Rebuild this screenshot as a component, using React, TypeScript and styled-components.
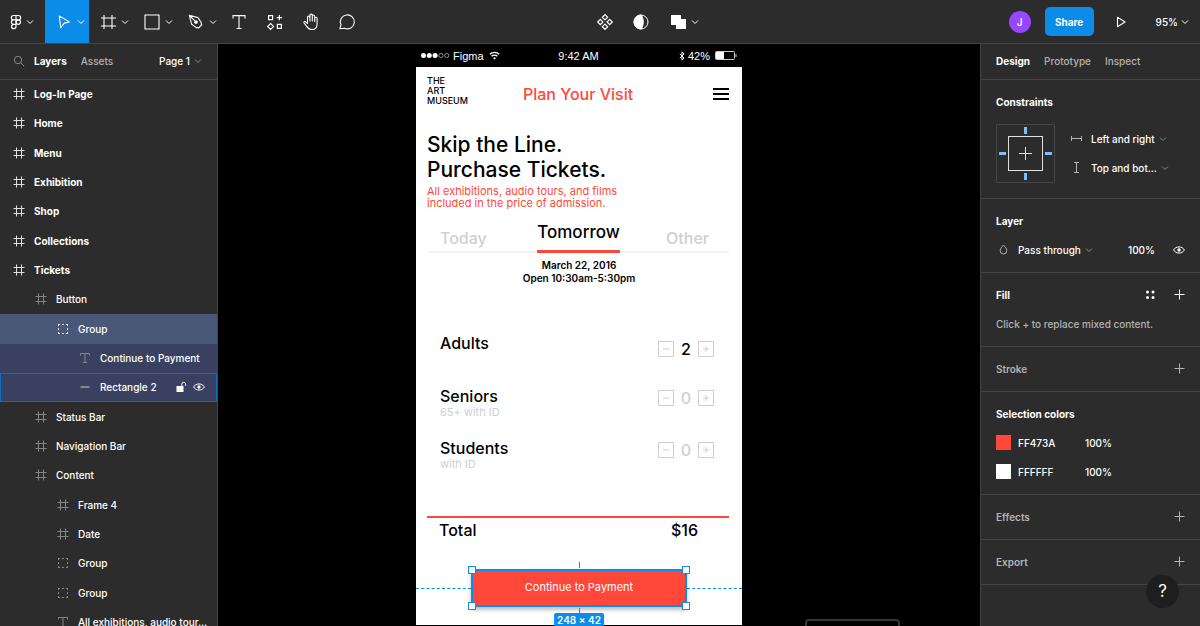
import React from "react";
import styled, { createGlobalStyle, css } from "styled-components";

const c = {
  panel: "#2c2c2c",
  line: "#444444",
  blue: "#0c8ce9",
  red: "#ff473a",
  text: "#ffffff",
  muted: "#b3b3b3",
  faint: "#8a8a8a",
  pale: "#d0d0d0",
};

const GlobalStyle = createGlobalStyle`
  *, *::before, *::after { box-sizing: border-box; }
  body { margin: 0; background: #000; overflow: hidden; }
  button, input, select {
    font: inherit; color: inherit; background: none; border: 0; padding: 0; margin: 0;
  }
  ul { list-style: none; margin: 0; padding: 0; }
  h1, h2, h3, p { margin: 0; }
  svg { display: block; flex: none; }
`;

const App = styled.div`
  display: grid;
  grid-template: auto minmax(0, 1fr) / 218px minmax(0, 1fr) 220px;
  height: 100vh;
  font: 500 10px/16px Inter, "Liberation Sans", sans-serif;
  color: ${c.text};
`;

/* ---------- Toolbar ---------- */

const Toolbar = styled.header`
  grid-column: 1 / -1;
  display: grid;
  grid-template-columns: 1fr auto 1fr;
  height: 44px;
  background: ${c.panel};
  border-bottom: 1px solid ${c.line};
`;

const ToolGroup = styled.div<{ $place?: "center" | "end" }>`
  display: flex;
  align-items: center;
  padding-bottom: 1px;
  ${(p) => p.$place === "center" && css`padding-left: 90px;`}
  ${(p) => p.$place === "end" && css`justify-content: flex-end; padding-right: 11px;`}
`;

const ToolButton = styled.button<{ $kind?: "menu" | "logo"; $active?: boolean }>`
  display: flex;
  align-items: center;
  justify-content: ${(p) => (p.$kind ? "flex-start" : "center")};
  gap: ${(p) => (p.$kind === "logo" ? 1 : 4)}px;
  width: ${(p) => (p.$kind === "logo" ? 45 : p.$kind === "menu" ? 44 : 36)}px;
  padding-left: ${(p) => (p.$kind === "logo" ? 7 : p.$kind === "menu" ? 10 : 0)}px;
  height: 43px;
  background: ${(p) => (p.$active ? c.blue : "transparent")};
`;

const Avatar = styled.span`
  display: grid;
  place-items: center;
  width: 22px;
  height: 22px;
  border-radius: 50%;
  background: #9747ff;
`;

const ShareButton = styled.button`
  width: 49px;
  height: 29px;
  margin: 0 9px 0 14px;
  border-radius: 5px;
  background: ${c.blue};
  font-weight: 700;
`;

const ZoomButton = styled.button`
  display: flex;
  align-items: center;
  gap: 3px;
  margin-left: 17px;
`;

/* ---------- Panels ---------- */

const LeftPanel = styled.aside`
  background: ${c.panel};
  border-right: 1px solid ${c.line};
  overflow: hidden;
`;

const RightPanel = styled.aside`
  position: relative;
  background: ${c.panel};
  border-left: 1px solid ${c.line};
  overflow: hidden;
`;

const PanelHead = styled.div`
  display: flex;
  align-items: center;
  gap: 14px;
  height: 36px;
  padding: 0 15px 1px;
  border-bottom: 1px solid ${c.line};
`;

const LayersHead = styled(PanelHead)`
  padding-left: 13px;
  & > svg { margin-right: -5px; }
`;

const TabButton = styled.button<{ $on?: boolean }>`
  font-weight: ${(p) => (p.$on ? 700 : 500)};
  color: ${(p) => (p.$on ? c.text : c.muted)};
`;

const PageButton = styled.button`
  display: flex;
  align-items: center;
  gap: 4px;
  margin-left: auto;
`;

const LayerRow = styled.li<{ $depth: number; $tone?: "selected" | "child" | "hover" }>`
  display: flex;
  align-items: center;
  gap: 9px;
  height: 29px;
  padding: 0 12px 1px ${(p) => 13 + p.$depth * 22}px;
  font-weight: ${(p) => (p.$depth ? 500 : 700)};
  white-space: nowrap;
  color: ${c.text};
  background: ${(p) => (p.$tone === "selected" ? "#4a5878" : p.$tone ? "#3a4160" : "transparent")};
  ${(p) => p.$tone === "hover" && css`box-shadow: inset 0 0 0 1px #0c6fbe;`}
  &:nth-child(3n) { height: 30px; }
  & > svg { color: ${(p) => (p.$depth && p.$tone !== "selected" ? "#858585" : "#e0e0e0")}; }
`;

const RowActions = styled.span`
  display: flex;
  align-items: center;
  gap: 6px;
  margin-left: auto;
`;

const IconButton = styled.button`
  display: grid;
  place-items: center;
`;

/* ---------- Design panel ---------- */

const Section = styled.section`
  padding: 7px 15px 8px;
  border-bottom: 1px solid ${c.line};
`;

const Line = styled.div`
  display: flex;
  align-items: center;
  height: 29px;
`;

const SectionTitle = styled.h2<{ $dim?: boolean }>`
  flex: 1;
  font-size: 10px;
  line-height: 16px;
  font-weight: ${(p) => (p.$dim ? 600 : 700)};
  color: ${(p) => (p.$dim ? c.muted : c.text)};
`;

const Actions = styled.div<{ $dim?: boolean }>`
  display: flex;
  align-items: center;
  gap: 18px;
  margin-left: auto;
  color: ${(p) => (p.$dim ? c.muted : c.text)};
`;

const ConstraintGrid = styled.div`
  display: grid;
  grid-template-columns: 59px 1fr;
  gap: 14px;
  padding: 8px 0 7px;
`;

const Field = styled.label`
  display: flex;
  align-items: center;
  gap: 7px;
  height: 29px;
  color: ${c.muted};
`;

const Select = styled.select`
  appearance: none;
  field-sizing: content;
  margin-right: -3px;
  color: ${c.text};
  outline: 0;
`;

const Input = styled.input<{ $w: number }>`
  width: ${(p) => p.$w}px;
  height: 16px;
  outline: 0;
`;

const Hint = styled.p`
  color: ${c.muted};
`;

const Swatch = styled.span<{ $fill: string }>`
  width: 15px;
  height: 15px;
  margin-right: 7px;
  background: ${(p) => p.$fill};
`;

const HelpButton = styled.button`
  position: absolute;
  right: 21px;
  bottom: 18px;
  width: 33px;
  height: 33px;
  border-radius: 50%;
  background: #1e1e1e;
  font-size: 17px;
  line-height: 33px;
  font-weight: 400;
`;

/* ---------- Canvas ---------- */

const Canvas = styled.main`
  position: relative;
  overflow: hidden;
  background: #000;
`;

const Phone = styled.article`
  position: absolute;
  top: 0;
  left: calc(50% - 183px);
  width: 326px;
  height: 581px;
  background: #fff;
  color: #000;
`;

const StatusBar = styled.div`
  display: grid;
  grid-template-columns: 1fr auto 1fr;
  align-items: center;
  height: 23px;
  padding: 0 5px 0 4px;
  background: #000;
  color: #fff;
  font: 400 11px/16px "Liberation Sans", sans-serif;
`;

const StatusSide = styled.div<{ $end?: boolean }>`
  display: flex;
  align-items: center;
  gap: 3px;
  justify-content: ${(p) => (p.$end ? "flex-end" : "flex-start")};
  & > span + svg { margin-left: 2px; }
`;

const NavBar = styled.div`
  display: grid;
  grid-template-columns: 1fr auto 1fr;
  align-items: center;
  height: 54px;
  padding: 0 13px 1px 11px;
`;

const Brand = styled.p`
  padding-bottom: 5px;
  font-size: 9px;
  line-height: 10px;
`;

const ScreenTitle = styled.h1`
  font-size: 16px;
  line-height: 20px;
  font-weight: 500;
  color: ${c.red};
`;

const MenuButton = styled.button`
  justify-self: end;
`;

const Intro = styled.div`
  padding: 11px 11px 0;
`;

const Headline = styled.h2`
  font-size: 21px;
  line-height: 25px;
  font-weight: 500;
`;

const Lead = styled.p`
  padding-top: 3px;
  font-size: 11px;
  line-height: 12px;
  font-weight: 400;
  color: ${c.red};
`;

const DayTabs = styled.div`
  display: grid;
  grid-template-columns: 1fr 83px 1fr;
  height: 29px;
  margin: 15px 13px 0 12px;
  border-bottom: 2px solid #f2f2f2;
`;

const DayTab = styled.button<{ $on?: boolean; $end?: boolean }>`
  height: 29px;
  padding: ${(p) => (p.$on ? "0 0 10px" : p.$end ? "0 20px 2px 0" : "0 0 2px 12px")};
  text-align: ${(p) => (p.$on ? "center" : p.$end ? "right" : "left")};
  font-size: ${(p) => (p.$on ? 17 : 16)}px;
  line-height: 16px;
  white-space: nowrap;
  color: ${(p) => (p.$on ? "#000" : c.pale)};
  border-bottom: ${(p) => (p.$on ? `3px solid ${c.red}` : "0")};
`;

const Hours = styled.p`
  padding-top: 6px;
  font-size: 10px;
  line-height: 13px;
  font-weight: 600;
  text-align: center;
`;

const TicketList = styled.ul`
  height: 231px;
  padding: 48px 28px 0 24px;
`;

const Ticket = styled.li`
  display: flex;
  justify-content: space-between;
  height: 52px;
  &:first-child { height: 53px; }
`;

const TicketName = styled.h3`
  font-size: 16px;
  line-height: 20px;
  font-weight: 500;
`;

const TicketNote = styled.p`
  font-size: 11px;
  line-height: 12px;
  font-weight: 400;
  color: ${c.pale};
`;

const Stepper = styled.div<{ $low: boolean }>`
  display: flex;
  align-items: center;
  height: 16px;
  margin-top: ${(p) => (p.$low ? 8 : 4)}px;
`;

const StepButton = styled.button`
  display: grid;
  place-items: center;
  width: 16px;
  height: 16px;
  border: 1px solid ${c.pale};
  color: ${c.pale};
`;

const Count = styled.output<{ $on: boolean }>`
  width: 24px;
  text-align: center;
  font-size: 16px;
  line-height: 16px;
  color: ${(p) => (p.$on ? "#000" : c.pale)};
`;

const Total = styled.div`
  display: flex;
  justify-content: space-between;
  margin: 0 13px 0 11px;
  padding: 2px 31px 0 12px;
  border-top: 2px solid ${c.red};
  font-size: 16px;
  line-height: 20px;
`;

const PayRow = styled.div`
  display: grid;
  grid-template-columns: 1fr 216px 1fr;
  align-items: center;
  margin-top: 29px;
`;

const Guide = styled.span`
  border-top: 1px dashed ${c.blue};
`;

const Selection = styled.div`
  position: relative;
  height: 38px;
  border: 2px solid ${c.blue};
  box-shadow: 0 3px 4px rgba(0, 0, 0, 0.25);
`;

const PayButton = styled.button`
  display: block;
  width: 100%;
  height: 100%;
  padding-bottom: 2px;
  background: ${c.red};
  color: #fff;
  font-size: 11px;
  font-weight: 400;
`;

const Handle = styled.span<{ $x: "left" | "right"; $y: "top" | "bottom" }>`
  position: absolute;
  ${(p) => p.$x}: -5px;
  ${(p) => p.$y}: -5px;
  width: 8px;
  height: 8px;
  background: #fff;
  border: 1px solid ${c.blue};
`;

const Tick = styled.span<{ $y: "top" | "bottom" }>`
  position: absolute;
  left: 50%;
  ${(p) => p.$y}: -9px;
  height: 6px;
  border-left: 1px dashed ${c.blue};
`;

const SizeBadge = styled.span`
  position: absolute;
  top: 42px;
  left: 50%;
  transform: translateX(-50%);
  padding: 1px 3px 0;
  border-radius: 2px 2px 0 0;
  background: ${c.blue};
  color: #fff;
  font-size: 10px;
  line-height: 13px;
  font-weight: 600;
  white-space: nowrap;
`;

const Toast = styled.div`
  position: absolute;
  left: calc(50% + 206px);
  bottom: -8px;
  width: 95px;
  height: 15px;
  border: 2px solid #363636;
  border-radius: 4px;
`;

/* ---------- Icons ---------- */

const Svg = ({ w, h = w, children, sw = 1 }: { w: number; h?: number; sw?: number; children: React.ReactNode }) => (
  <svg width={w} height={h} viewBox={`0 0 ${w} ${h}`} fill="none" stroke="currentColor" strokeWidth={sw} aria-hidden="true">
    {children}
  </svg>
);

const Chevron = ({ dim }: { dim?: boolean }) => (
  <Svg w={8}><path d="M1 2.500l3 3 3-3" stroke={dim ? c.faint : "#ffffff"} /></Svg>
);
const FrameIcon = () => <Svg w={12}><path d="M3.500.5v11M8.500.5v11M.5 3.500h11M.5 8.500h11" /></Svg>;
const GroupIcon = () => (
  <Svg w={12}><path d="M1 1.500h2M5 1.500h2M9 1.500h2M1 10.500h2M5 10.500h2M9 10.500h2M1.500 5v2M10.500 5v2M1.500 2v1M10.500 2v1M1.500 9v1M10.500 9v1" /></Svg>
);
const TextIcon = () => <Svg w={12}><path d="M1.500 3.500v-2h9v2M6 1.500v9M4 10.500h4" /></Svg>;
const RectLayerIcon = () => <Svg w={12}><path d="M1.500 6h9" strokeWidth="2" /></Svg>;
const SearchIcon = () => <Svg w={12}><circle cx="5" cy="5" r="3.700" stroke="#8a8a8a" /><path d="m7.800 7.800 3.400 3.400" stroke="#8a8a8a" /></Svg>;
const EyeIcon = () => (
  <Svg w={12}><path d="M.6 6C2.800 1.900 9.200 1.900 11.400 6 9.200 10.100 2.800 10.100.6 6Z" stroke="#fff" /><circle cx="6" cy="6" r="1.700" fill="#fff" stroke="none" /></Svg>
);
const UnlockIcon = () => (
  <Svg w={12}><path d="M1.500 5h7v6h-7z" fill="#fff" stroke="none" /><path d="M6.800 5.500V3.200a1.900 1.900 0 0 1 3.800 0v1.600" stroke="#fff" /></Svg>
);
const PlusIcon = () => <Svg w={11}><path d="M5.500.5v10M.5 5.500h10" /></Svg>;
const StylesIcon = () => (
  <Svg w={11}><g fill="currentColor" stroke="none"><circle cx="2.500" cy="3" r="1.500" /><circle cx="8" cy="3" r="1.500" /><circle cx="2.500" cy="8.500" r="1.500" /><circle cx="8" cy="8.500" r="1.500" /></g></Svg>
);
const DropIcon = () => <Svg w={15}><path d="M7.500 3C6 5 4.200 6.600 4.200 8.700a3.300 3.300 0 0 0 6.600 0C10.800 6.600 9 5 7.500 3Z" /></Svg>;
const HorizontalIcon = () => <Svg w={15}><path d="M2.500 5v5M12.500 5v5M2.500 7.500h10" /></Svg>;
const VerticalIcon = () => <Svg w={15}><path d="M5 2.500h5M5 12.500h5M7.500 2.500v10" /></Svg>;

const LogoIcon = () => (
  <Svg w={18} sw={1.200}>
    <path d="M9 2.500H6.600a2.200 2.200 0 0 0 0 4.400H9zM9 2.500h2.400a2.200 2.200 0 0 1 0 4.400H9zM9 6.900H6.600a2.200 2.200 0 0 0 0 4.400H9zM9 11.300H6.600A2.200 2.200 0 1 0 9 13.500z" />
    <circle cx="11.300" cy="9.100" r="2.200" />
  </Svg>
);
const MoveIcon = () => <Svg w={18} sw={1.100}><path d="M4.300 3 14.300 8.900 9.300 10.100 5.700 14.700z" strokeLinejoin="round" /></Svg>;
const FrameTool = () => <Svg w={18} sw={1.100}><path d="M5 2v14M13 2v14M2 5h15M2 13h15" /></Svg>;
const RectTool = () => <Svg w={18} sw={1.100}><path d="M2 2h14v14H2z" /></Svg>;
const PenTool = () => (
  <Svg w={18} sw={1.100}>
    <path d="M2.300 2.300 11 4.600l3.300 5.200-.1 2.600-2.300 2.300-2.600-.1-4.600-3.300zM2.300 2.300l5.600 5.600M11.300 15.300l3.900-3.900" strokeLinejoin="round" />
    <circle cx="9" cy="9" r="1.300" fill="currentColor" />
  </Svg>
);
const TypeTool = () => <Svg w={18} sw={1.100}><path d="M3 5.500V2.600h12v2.900M9 2.600v13M6.500 15.500h5" /></Svg>;
const ResourcesTool = () => <Svg w={18} sw={1.200}><path d="M2.600 2.600h4v4h-4zM11.400 11.400h4v4h-4zM13.400 1.900v5.400M10.700 4.600h5.400M4.600 10.500l2.900 2.900-2.900 2.900-2.900-2.900z" /></Svg>;
const HandTool = () => (
  <Svg w={18} sw={1.100}>
    <path d="M5.500 10.500V4.300a1.200 1.200 0 0 1 2.400 0V8V2.300a1.200 1.200 0 0 1 2.400 0V8 3.200a1.200 1.200 0 0 1 2.400 0V8.500 5.500a1.200 1.200 0 0 1 2.400 0v5.200c0 3.600-2 5.800-5.200 5.800-2.800 0-4.200-1.400-5.400-3.400L2 9.900c-.6-1 .8-2 1.700-1.100z" strokeLinejoin="round" />
  </Svg>
);
const CommentTool = () => <Svg w={18} sw={1.100}><path d="M1.800 15.800 3 11.800A7 7 0 1 1 6.600 15.300z" strokeLinejoin="round" /></Svg>;
const ComponentIcon = () => (
  <Svg w={18} sw={1.200}><path d="M9 1.700 11.600 4.300 9 6.900 6.400 4.300zM9 11.100l2.600 2.600L9 16.300l-2.600-2.600zM4.300 6.400 6.900 9l-2.600 2.600L1.700 9zM13.700 6.400 16.300 9l-2.600 2.600L11.100 9z" /></Svg>
);
const MaskIcon = () => (
  <Svg w={18}><circle cx="9" cy="9" r="7" /><path d="M9 2a7 7 0 0 0 0 14c3-3 3-11 0-14Z" fill="currentColor" /></Svg>
);
const UnionIcon = () => <Svg w={18}><path d="M2 2h10v4h5v10H7v-4H2z" fill="currentColor" stroke="none" /></Svg>;
const PlayIcon = () => <Svg w={18} sw={1.100}><path d="M5.500 4.300v9.400L13 9z" strokeLinejoin="round" /></Svg>;

const SignalIcon = () => (
  <svg width="30" height="7" viewBox="0 0 30 7" aria-hidden="true">
    {[0, 1, 2, 3, 4].map((i) => (
      <circle key={i} cx={3.500 + i * 5.800} cy="3.500" r={i < 3 ? 2.500 : 2.100} fill={i < 3 ? "#fff" : "none"} stroke={i < 3 ? "none" : "#bbb"} strokeWidth=".7" />
    ))}
  </svg>
);
const WifiIcon = () => (
  <Svg w={11} h={9} sw={1.400}><path d="M.8 3.300a6.800 6.800 0 0 1 9.400 0M2.600 5.300a4.200 4.200 0 0 1 5.800 0" /><path d="M5.500 8.700 4 6.900a2.300 2.300 0 0 1 3 0z" fill="currentColor" stroke="none" /></Svg>
);
const BluetoothIcon = () => <Svg w={6} h={10}><path d="M.8 2.800 5 7 3 9.200V.8L5 3 .8 7.200" /></Svg>;
const BatteryIcon = () => (
  <Svg w={22} h={9}><rect x=".5" y=".5" width="19" height="8" rx="1" stroke="#ccc" /><path d="M1 1h8v7H1z" fill="#fff" stroke="none" /><path d="M21 3v3" stroke="#ccc" /></Svg>
);
const BurgerIcon = () => <Svg w={16} h={12} sw={2}><path d="M0 1h16M0 6h16M0 11h16" /></Svg>;

const ConstraintBox = () => (
  <Svg w={59}>
    <rect x=".5" y=".5" width="58" height="58" rx="1" stroke="#484848" />
    <rect x="12.500" y="12.500" width="34" height="34" stroke="#e0e0e0" />
    <path d="M29.500 23v13M23 29.500h13" stroke="#e0e0e0" />
    <path d="M29.500 3v7M29.500 49v7M3 29.500h7M49 29.500h7" stroke="#7cc0fa" strokeWidth="3" />
  </Svg>
);

/* ---------- Data ---------- */

type Kind = "frame" | "group" | "text" | "rect";
const layerIcons: Record<Kind, () => React.ReactElement> = {
  frame: FrameIcon,
  group: GroupIcon,
  text: TextIcon,
  rect: RectLayerIcon,
};

const layers: { name: string; depth: number; kind: Kind; tone?: "selected" | "child" | "hover" }[] = [
  { name: "Log-In Page", depth: 0, kind: "frame" },
  { name: "Home", depth: 0, kind: "frame" },
  { name: "Menu", depth: 0, kind: "frame" },
  { name: "Exhibition", depth: 0, kind: "frame" },
  { name: "Shop", depth: 0, kind: "frame" },
  { name: "Collections", depth: 0, kind: "frame" },
  { name: "Tickets", depth: 0, kind: "frame" },
  { name: "Button", depth: 1, kind: "frame" },
  { name: "Group", depth: 2, kind: "group", tone: "selected" },
  { name: "Continue to Payment", depth: 3, kind: "text", tone: "child" },
  { name: "Rectangle 2", depth: 3, kind: "rect", tone: "hover" },
  { name: "Status Bar", depth: 1, kind: "frame" },
  { name: "Navigation Bar", depth: 1, kind: "frame" },
  { name: "Content", depth: 1, kind: "frame" },
  { name: "Frame 4", depth: 2, kind: "frame" },
  { name: "Date", depth: 2, kind: "frame" },
  { name: "Group", depth: 2, kind: "group" },
  { name: "Group", depth: 2, kind: "group" },
  { name: "All exhibitions, audio tour...", depth: 2, kind: "text" },
];

const tickets = [
  { name: "Adults", note: "", count: 2 },
  { name: "Seniors", note: "65+ with ID", count: 0 },
  { name: "Students", note: "with ID", count: 0 },
];

const colors = ["FF473A", "FFFFFF"];

/* ---------- Parts ---------- */

const Tool = ({ label, menu, active, children }: { label: string; menu?: "menu" | "logo"; active?: boolean; children: React.ReactNode }) => (
  <ToolButton aria-label={label} $kind={menu} $active={active}>
    {children}
    {menu && <Chevron />}
  </ToolButton>
);

const EmptySection = ({ title }: { title: string }) => (
  <Section>
    <Line>
      <SectionTitle $dim>{title}</SectionTitle>
      <Actions $dim><IconButton aria-label={`Add ${title}`}><PlusIcon /></IconButton></Actions>
    </Line>
  </Section>
);

const PhoneScreen = () => (
  <Phone>
    <StatusBar>
      <StatusSide><SignalIcon /><span>Figma</span><WifiIcon /></StatusSide>
      <span>9:42 AM</span>
      <StatusSide $end><BluetoothIcon /><span>42%</span><BatteryIcon /></StatusSide>
    </StatusBar>
    <NavBar>
      <Brand>THE<br />ART<br />MUSEUM</Brand>
      <ScreenTitle>Plan Your Visit</ScreenTitle>
      <MenuButton aria-label="Menu"><BurgerIcon /></MenuButton>
    </NavBar>
    <Intro>
      <Headline>Skip the Line.<br />Purchase Tickets.</Headline>
      <Lead>All exhibitions, audio tours, and films<br />included in the price of admission.</Lead>
    </Intro>
    <DayTabs>
      <DayTab>Today</DayTab>
      <DayTab $on>Tomorrow</DayTab>
      <DayTab $end>Other</DayTab>
    </DayTabs>
    <Hours>March 22, 2016<br />Open 10:30am-5:30pm</Hours>
    <TicketList>
      {tickets.map((t) => (
        <Ticket key={t.name}>
          <div>
            <TicketName>{t.name}</TicketName>
            {t.note && <TicketNote>{t.note}</TicketNote>}
          </div>
          <Stepper $low={!t.note}>
            <StepButton aria-label={`Fewer ${t.name}`}><Svg w={8}><path d="M1 4h6" /></Svg></StepButton>
            <Count $on={t.count > 0}>{t.count}</Count>
            <StepButton aria-label={`More ${t.name}`}><Svg w={8}><path d="M1 4h6M4 1v6" /></Svg></StepButton>
          </Stepper>
        </Ticket>
      ))}
    </TicketList>
    <Total><span>Total</span><span>$16</span></Total>
    <PayRow>
      <Guide />
      <Selection>
        <PayButton>Continue to Payment</PayButton>
        <Tick $y="top" /><Tick $y="bottom" />
        <Handle $x="left" $y="top" /><Handle $x="right" $y="top" />
        <Handle $x="left" $y="bottom" /><Handle $x="right" $y="bottom" />
        <SizeBadge>248 × 42</SizeBadge>
      </Selection>
      <Guide />
    </PayRow>
  </Phone>
);

export default function DesignEditor() {
  return (
    <App>
      <GlobalStyle />
      <Toolbar>
        <ToolGroup>
          <Tool label="Main menu" menu="logo"><LogoIcon /></Tool>
          <Tool label="Move" menu="menu" active><MoveIcon /></Tool>
          <Tool label="Frame" menu="menu"><FrameTool /></Tool>
          <Tool label="Shape" menu="menu"><RectTool /></Tool>
          <Tool label="Pen" menu="menu"><PenTool /></Tool>
          <Tool label="Text"><TypeTool /></Tool>
          <Tool label="Resources"><ResourcesTool /></Tool>
          <Tool label="Hand"><HandTool /></Tool>
          <Tool label="Comment"><CommentTool /></Tool>
        </ToolGroup>
        <ToolGroup $place="center">
          <Tool label="Create component"><ComponentIcon /></Tool>
          <Tool label="Use as mask"><MaskIcon /></Tool>
          <Tool label="Union" menu="menu"><UnionIcon /></Tool>
        </ToolGroup>
        <ToolGroup $place="end">
          <Avatar>J</Avatar>
          <ShareButton>Share</ShareButton>
          <Tool label="Present"><PlayIcon /></Tool>
          <ZoomButton>95%<Chevron /></ZoomButton>
        </ToolGroup>
      </Toolbar>

      <LeftPanel>
        <LayersHead>
          <SearchIcon />
          <TabButton $on>Layers</TabButton>
          <TabButton>Assets</TabButton>
          <PageButton>Page 1<Chevron dim /></PageButton>
        </LayersHead>
        <ul>
          {layers.map((l, i) => {
            const Icon = layerIcons[l.kind];
            return (
              <LayerRow key={i} $depth={l.depth} $tone={l.tone}>
                <Icon />
                <span>{l.name}</span>
                {l.tone === "hover" && (
                  <RowActions>
                    <IconButton aria-label="Lock"><UnlockIcon /></IconButton>
                    <IconButton aria-label="Hide"><EyeIcon /></IconButton>
                  </RowActions>
                )}
              </LayerRow>
            );
          })}
        </ul>
      </LeftPanel>

      <Canvas>
        <PhoneScreen />
        <Toast />
      </Canvas>

      <RightPanel>
        <PanelHead>
          <TabButton $on>Design</TabButton>
          <TabButton>Prototype</TabButton>
          <TabButton>Inspect</TabButton>
        </PanelHead>
        <Section>
          <Line><SectionTitle>Constraints</SectionTitle></Line>
          <ConstraintGrid>
            <ConstraintBox />
            <div>
              <Field>
                <HorizontalIcon />
                <Select aria-label="Horizontal constraint"><option>Left and right</option></Select>
                <Chevron dim />
              </Field>
              <Field>
                <VerticalIcon />
                <Select aria-label="Vertical constraint"><option>Top and bot...</option></Select>
                <Chevron dim />
              </Field>
            </div>
          </ConstraintGrid>
        </Section>
        <Section>
          <Line><SectionTitle>Layer</SectionTitle></Line>
          <Line>
            <Field>
              <DropIcon />
              <Select aria-label="Blend mode"><option>Pass through</option></Select>
              <Chevron dim />
            </Field>
            <Actions>
              <Input $w={27} aria-label="Layer opacity" defaultValue="100%" />
              <IconButton aria-label="Toggle visibility"><EyeIcon /></IconButton>
            </Actions>
          </Line>
        </Section>
        <Section>
          <Line>
            <SectionTitle>Fill</SectionTitle>
            <Actions>
              <IconButton aria-label="Styles"><StylesIcon /></IconButton>
              <IconButton aria-label="Add fill"><PlusIcon /></IconButton>
            </Actions>
          </Line>
          <Line><Hint>Click + to replace mixed content.</Hint></Line>
        </Section>
        <EmptySection title="Stroke" />
        <Section>
          <Line><SectionTitle>Selection colors</SectionTitle></Line>
          {colors.map((hex) => (
            <Line key={hex}>
              <Swatch $fill={`#${hex}`} />
              <Input $w={67} aria-label="Color" defaultValue={hex} />
              <Input $w={27} aria-label="Opacity" defaultValue="100%" />
            </Line>
          ))}
        </Section>
        <EmptySection title="Effects" />
        <EmptySection title="Export" />
        <HelpButton aria-label="Help">?</HelpButton>
      </RightPanel>
    </App>
  );
}
